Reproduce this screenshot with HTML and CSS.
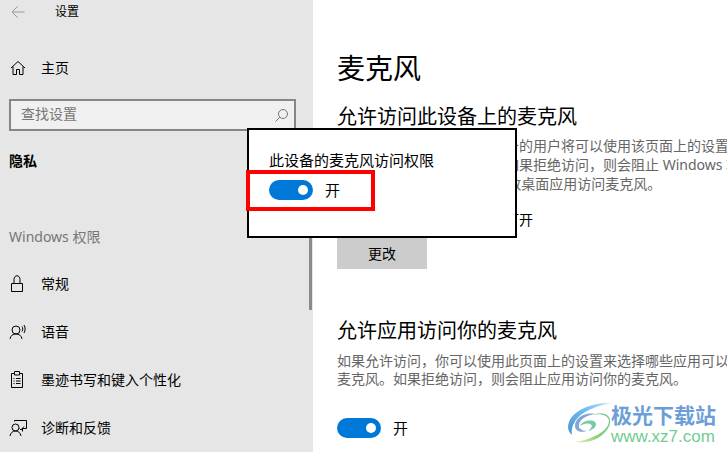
FILE: index.html
```html
<!DOCTYPE html>
<html lang="zh-CN">
<head>
    <meta charset="UTF-8">
    <title>设置</title>
    <link rel="stylesheet" href="styles.css">
</head>
<body>
    <div class="sidebar">
        <div class="top-row">
            <svg class="back-icon" width="14" height="12" viewBox="0 0 14 12"><path d="M6.500 .5 1 6l5.500 5.500M1 6h12.500"/></svg>
            <span class="top-title">设置</span>
        </div>
        <div class="nav-item home-item">
            <svg class="nav-icon" width="18" height="16" viewBox="0 0 18 16"><path d="M2 8 9 1.500 16 8M4 6.500V14.500H7.500V9.500H10.500V14.500H14V6.500"/></svg>
            <span>主页</span>
        </div>
        <div class="search-box">
            <span class="search-text">查找设置</span>
            <svg class="search-icon" width="13" height="13" viewBox="0 0 13 13"><circle cx="8" cy="5" r="4.500"/><path d="M4.800 8.200 .5 12.500"/></svg>
        </div>
        <div class="section-name">隐私</div>
        <div class="section-label">Windows 权限</div>
        <div class="nav-item first-item">
            <svg class="nav-icon" width="16" height="18" viewBox="0 0 16 18"><path d="M2.500 8.500H13.500V16.500H2.500ZM5 8.500V4.500C5 -.5 11 -.5 11 4.500V8.500"/></svg>
            <span>常规</span>
        </div>
        <div class="nav-item">
            <svg class="nav-icon" width="18" height="16" viewBox="0 0 18 16"><circle cx="7" cy="6" r="4"/><path d="M1 15C1.500 11.500 4 10 7 10S12.500 11.500 13 15M13 2.500C14 4 14 6 13 7.500M15 1C16.500 3.500 16.500 6.500 15 9"/></svg>
            <span>语音</span>
        </div>
        <div class="nav-item">
            <svg class="nav-icon" width="16" height="18" viewBox="0 0 16 18"><path d="M5 2.500H2.500V16.500H13.500V2.500H11M5.500 .5H10.500V4H5.500ZM4.500 7.500H5.500M7 7.500H11.500M4.500 10H5.500M7 10H11.500M4.500 12.500H5.500M7 12.500H11.500"/></svg>
            <span>墨迹书写和键入个性化</span>
        </div>
        <div class="nav-item">
            <svg class="nav-icon" width="18" height="18" viewBox="0 0 18 18"><circle cx="6.500" cy="8.500" r="3.500"/><path d="M1 17C1.500 14 3.500 12 6.500 12S11.500 14 12 17M5.500 2.500 5.500 1.500H17.500V9.500H13.500V12.500M10.500 9.500 12 11 15 7.500"/></svg>
            <span>诊断和反馈</span>
        </div>
        <div class="scroll-thumb"></div>
    </div>

    <div class="content">
        <h1 class="page-title">麦克风</h1>
        <h2 class="sub-title first-sub">允许访问此设备上的麦克风</h2>
        <p class="desc first-desc">如果允许访问，使用此台设备的用户将可以使用该页面上的设置选择其应用是否可以访问<br>应用访问此设备上麦克风。如果拒绝访问，则会阻止 Windows 功能、<br>Microsoft Store应用和大多数桌面应用访问麦克风。</p>
        <div class="status-line">此设备的麦克风访问权限已打开</div>
        <div class="change-btn">更改</div>
        <h2 class="sub-title second-sub">允许应用访问你的麦克风</h2>
        <p class="desc second-desc">如果允许访问，你可以使用此页面上的设置来选择哪些应用可以访问你的麦克风。<br>麦克风。如果拒绝访问，则会阻止应用访问你的麦克风。</p>
        <div class="toggle-row bottom-toggle">
            <span class="toggle"><span class="knob"></span></span>
            <span>开</span>
        </div>
    </div>

    <div class="popup">
        <div class="popup-title">此设备的麦克风访问权限</div>
        <div class="toggle-row popup-toggle">
            <span class="toggle"><span class="knob"></span></span>
            <span>开</span>
        </div>
        <div class="red-box"></div>
    </div>

    <div class="watermark">
        <svg class="wm-logo" width="46" height="42" viewBox="0 0 46 42">
            <defs>
                <linearGradient id="blueArc" x1="0" y1="1" x2="1" y2="0">
                    <stop offset="0" stop-color="#4f8fd0"/>
                    <stop offset=".6" stop-color="#6fc0ee"/>
                    <stop offset="1" stop-color="#c4e6f7"/>
                </linearGradient>
                <linearGradient id="greenArc" x1="1" y1="0" x2="0" y2="1">
                    <stop offset="0" stop-color="#6cc48a"/>
                    <stop offset=".6" stop-color="#8fd07c"/>
                    <stop offset="1" stop-color="#f2ee9c"/>
                </linearGradient>
            </defs>
            <path fill="url(#blueArc)" d="M44 2C30 1 12 6 4 17C0 23 0 30 5 34C3 25 10 14 22 9C30 5.500 38 3 44 2Z"/>
            <path fill="url(#greenArc)" d="M26 14C34 12 42 15 42 20C42 30 24 39 8 41C16 42 26 41 34 35C42 29 46 20 41 15C37 11 30 12 26 14Z"/>
            <path fill="#7fa6d6" d="M28 13C18 11 8 17 8 25C8 30 14 32 20 30C14 30 11 27 12 23C14 17 21 14 28 13Z"/>
            <path fill="#7cc8a0" d="M13 25C15 20 24 18 28 21C31 24 27 29 21 30C25 27 26 24 23 23C20 22 16 23 13 25Z"/>
        </svg>
        <div class="wm-text">
            <div class="wm-name">极光下载站</div>
            <div class="wm-url">www.xz7.com</div>
        </div>
    </div>
</body>
</html>
```

FILE: styles.css
```css
* {
    box-sizing: border-box;
}

body {
    margin: 0;
    width: 727px;
    height: 452px;
    display: flex;
    overflow: hidden;
    position: relative;
    background: #fff;
    color: #000;
    font-family: "Noto Sans", "Noto Sans CJK SC", sans-serif;
    font-size: 14px;
}

/* left column */
.sidebar {
    width: 313px;
    flex-shrink: 0;
    height: 452px;
    background: #e6e6e6;
    position: relative;
}

.top-row {
    height: 24px;
    display: flex;
    align-items: center;
    padding-left: 11px;
}

.back-icon path {
    fill: none;
    stroke: #999;
}

.top-title {
    font-size: 12px;
    line-height: 22px;
    margin-left: 30px;
}

.nav-item {
    height: 48px;
    display: flex;
    align-items: center;
    padding-left: 41px;
    position: relative;
    line-height: 20px;
}

.nav-icon {
    position: absolute;
    left: 9px;
    top: 50%;
    transform: translateY(-50%);
    overflow: visible;
}

.nav-icon path,
.nav-icon circle {
    fill: none;
    stroke: #000;
    stroke-width: 1;
}

.home-item {
    margin-top: 20px;
}

.first-item {
    margin-top: 13px;
}

.search-box {
    width: 287px;
    height: 32px;
    margin: 7px 0 0 9px;
    padding: 0 6px 0 10px;
    display: flex;
    align-items: center;
    justify-content: space-between;
    background: #f0f0f0;
    border: 2px solid #868686;
    color: #767676;
    line-height: 20px;
}

.search-text {
    margin-top: -2px;
}

.search-icon circle,
.search-icon path {
    fill: none;
    stroke: #767676;
}

.section-name {
    margin: 20px 0 0 9px;
    line-height: 20px;
    font-weight: 700;
}

.section-label {
    margin: 56px 0 0 9px;
    line-height: 20px;
    color: #767676;
}

.scroll-thumb {
    position: absolute;
    left: 309px;
    top: 150px;
    width: 3px;
    height: 160px;
    background: #8a8a8a;
}

/* right column */
.content {
    flex: 1;
    min-width: 0;
    padding: 48px 0 0 24px;
    overflow: hidden;
}

.page-title {
    margin: 0;
    font-size: 28px;
    font-weight: 400;
    line-height: 40px;
}

.sub-title {
    margin: 0;
    font-size: 20px;
    font-weight: 400;
    line-height: 28px;
}

.first-sub {
    margin-top: 15px;
}

.second-sub {
    margin-top: 48px;
}

.desc {
    margin: 0;
    color: #666;
    line-height: 19px;
    white-space: nowrap;
}

.first-desc {
    margin-top: 5px;
}

.second-desc {
    margin-top: 7px;
    line-height: 18px;
}

.status-line {
    margin-top: 17px;
    line-height: 20px;
}

.change-btn {
    width: 90px;
    height: 31px;
    margin-top: 8px;
    background: #ccc;
    text-align: center;
    line-height: 31px;
}

.toggle-row {
    display: flex;
    align-items: center;
    gap: 12px;
    font-size: 15px;
    line-height: 20px;
}

.bottom-toggle {
    margin-top: 30px;
}

.toggle {
    width: 44px;
    height: 20px;
    border-radius: 10px;
    background: #0078d7;
    display: flex;
    align-items: center;
    justify-content: flex-end;
    padding-right: 5px;
}

.knob {
    width: 10px;
    height: 10px;
    border-radius: 50%;
    background: #fff;
}

/* dialog over the page */
.popup {
    position: absolute;
    left: 247px;
    top: 128px;
    width: 270px;
    height: 110px;
    padding: 20px 0 0 20px;
    background: #fff;
    border: 2px solid #000;
}

.popup-title {
    font-size: 15px;
    line-height: 20px;
}

.popup-toggle {
    margin-top: 10px;
}

.red-box {
    position: absolute;
    left: -3px;
    top: 40px;
    width: 129px;
    height: 41px;
    border: 4px solid #f00;
}

/* watermark */
.watermark {
    position: absolute;
    left: 567px;
    top: 401px;
    display: flex;
}

.wm-text {
    margin-left: -2px;
}

.wm-name {
    font-size: 21px;
    font-weight: 700;
    line-height: 26px;
    color: #6c9fd8;
    font-family: "Noto Sans CJK SC", sans-serif;
}

.wm-url {
    margin-top: 1px;
    font-size: 17px;
    line-height: 18px;
    color: #72cc92;
    font-family: "Liberation Sans", sans-serif;
}
```
